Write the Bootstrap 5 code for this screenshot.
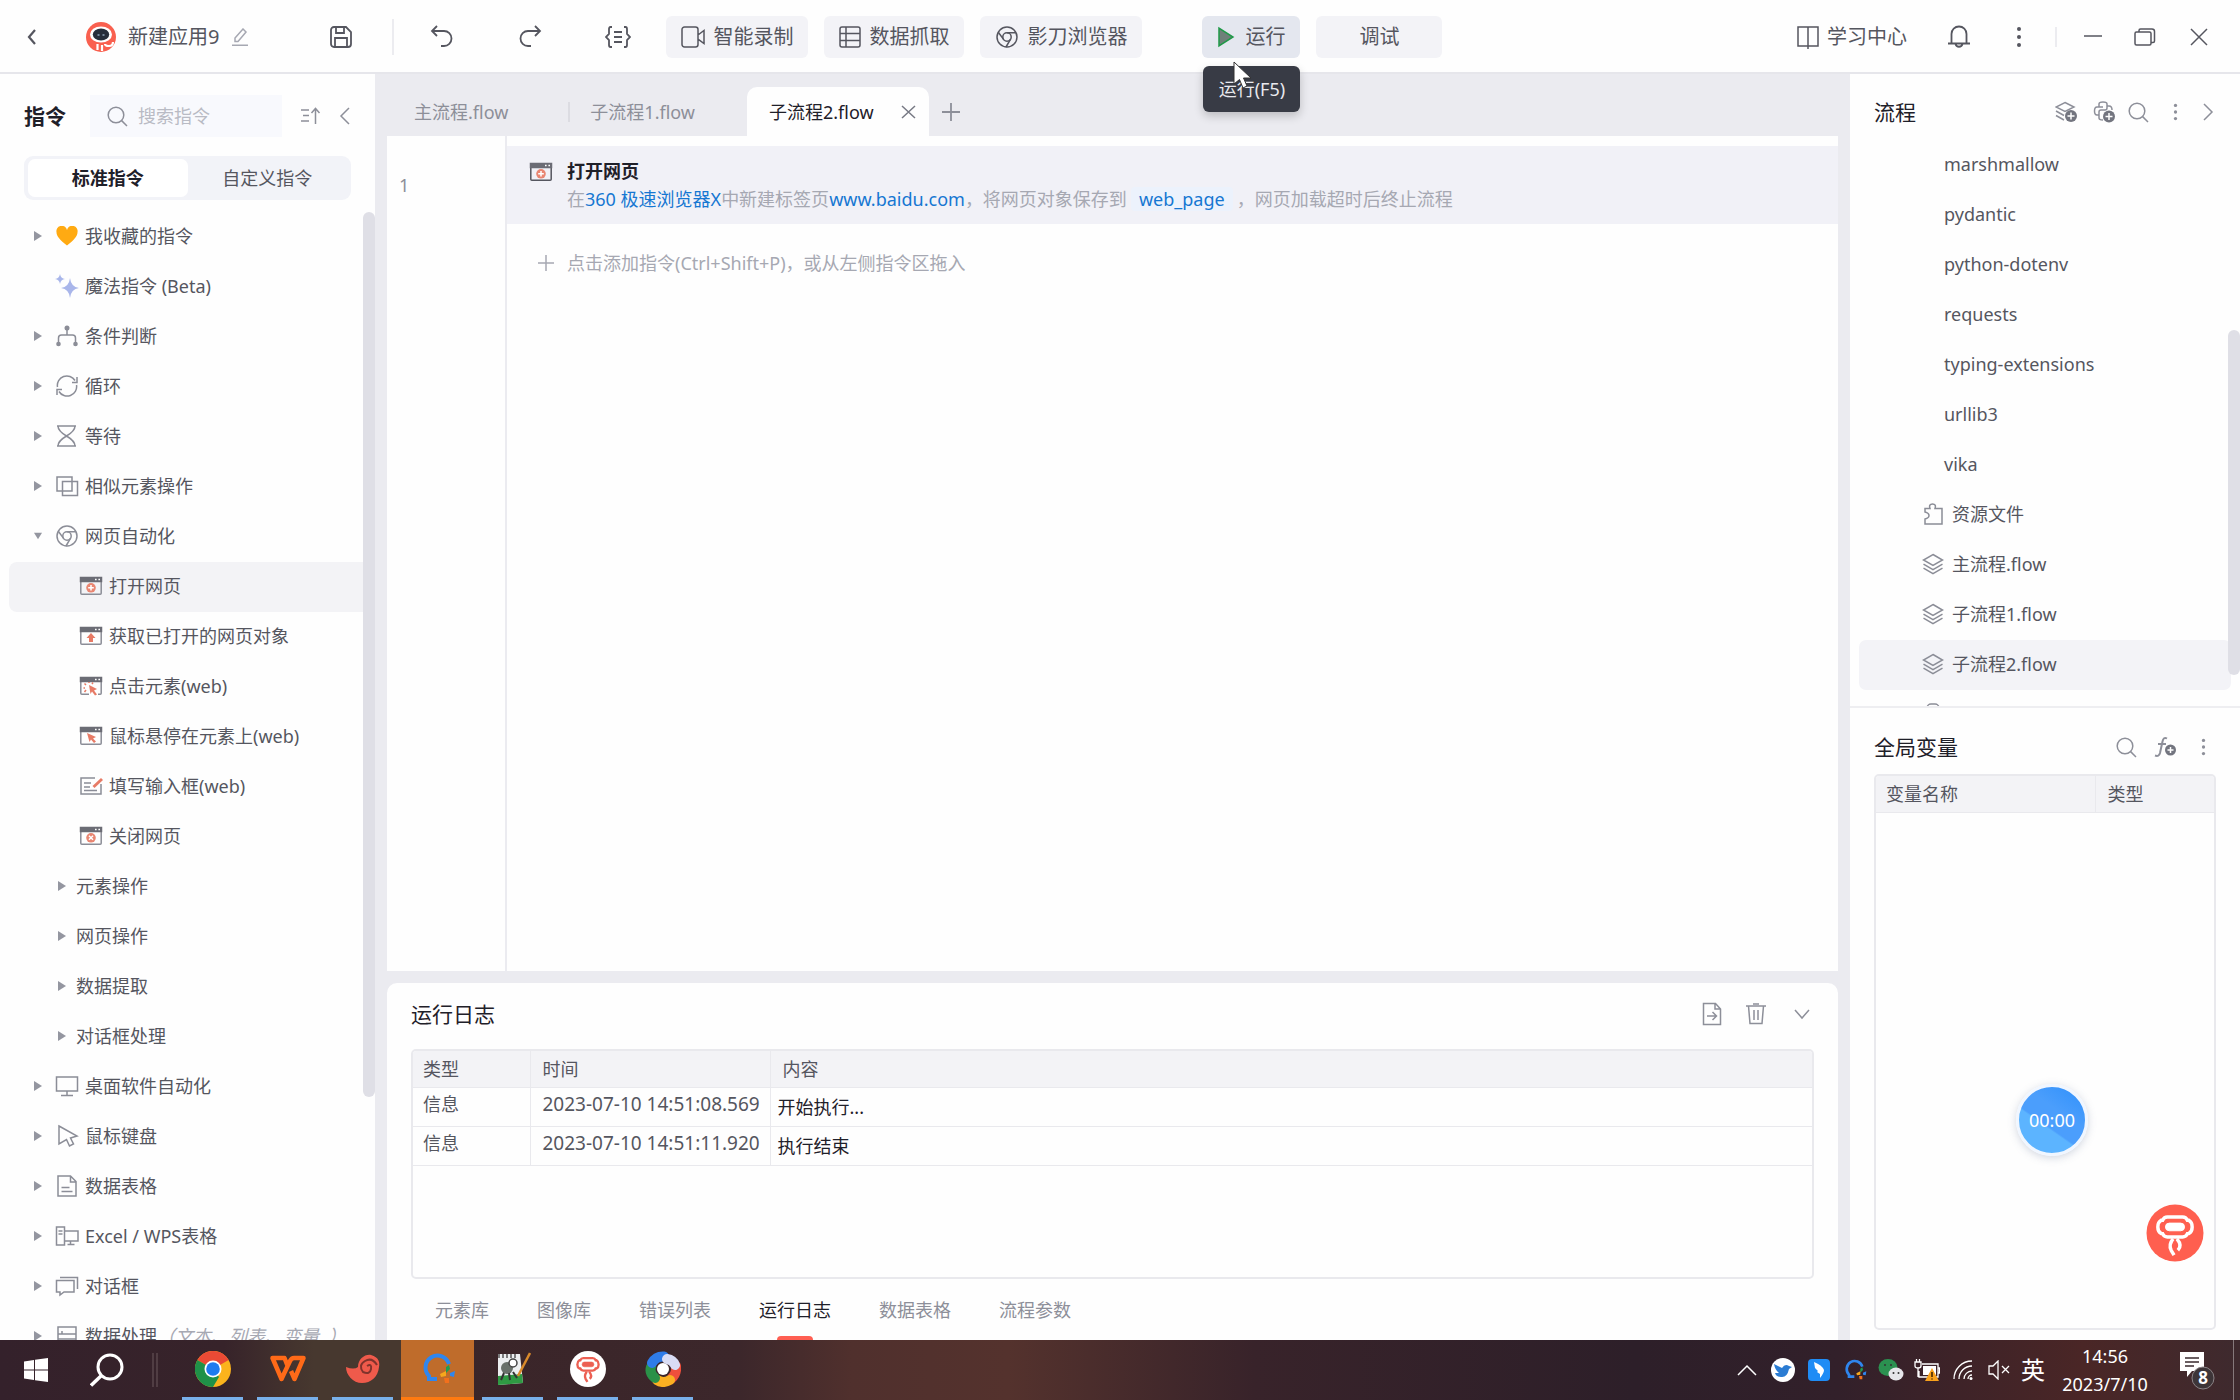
<!DOCTYPE html>
<html lang="zh-CN">
<head>
<meta charset="utf-8">
<meta name="viewport" content="width=device-width, initial-scale=1">
<title>新建应用9</title>
<link href="https://cdn.jsdelivr.net/npm/bootstrap@5.3.0/dist/css/bootstrap.min.css" rel="stylesheet">
<style>
:root{--ink:#1f2029;--txt:#55565f;--dim:#8d8f99;--pale:#a6a8b2;--line:#e9e9ed;--gut:#ebebf0;--soft:#f3f3f7;--blue:#1677d2;--red:#ff5f52}
body{font-family:"Noto Sans","Noto Sans CJK SC",sans-serif;font-size:18px;line-height:26px;color:var(--txt);background:var(--gut);height:100vh;overflow:hidden}
button,input{font:inherit;color:inherit}
svg{fill:none;stroke:currentColor;stroke-width:1.5;flex:none;display:block}
.plain{border:0;background:none;padding:0;display:flex;align-items:center;justify-content:center}
.ink{color:var(--ink)}.dim{color:var(--dim)}.pale{color:var(--pale)}.blue{color:var(--blue)}
.h21{font-size:21px;line-height:28px;color:var(--ink);font-weight:400;margin:0}
/* top bar */
.topbar{height:74px;border-bottom:2px solid #e6e6eb;background:#fefefe;font-size:20px;padding-top:1px}
.tbtn{width:40px;height:40px}
.g10{margin-left:10px}.g12{margin-left:12px}.g20{margin-left:20px}.g28{margin-left:28px}.g32{margin-left:32px}.g48{margin-left:48px}.g60{margin-left:60px}.g72{margin-left:72px}
.vline{width:2px;background:#ececf0}
.pill{height:42px;border:0;border-radius:6px;background:var(--soft);display:flex;align-items:center;gap:8px;padding:0 15px;white-space:nowrap}
.pill+.pill{margin-left:16px}
.pill.run{background:#e4e7ef;gap:10px}
.pill.debug{width:126px;justify-content:center;margin-left:16px}
.tip{position:absolute;top:50px;left:1px;width:97px;height:46px;line-height:46px;text-align:center;background:#383b45;color:#e8e9ee;font-size:18px;border-radius:6px;box-shadow:0 4px 10px #0003;z-index:5}
.cursor{position:absolute;left:31px;top:45px;z-index:6}
/* sidebar */
.side{width:375px;background:#fefefe}
.finder{width:192px;height:42px;background:#f8f9fd;padding-left:16px}
.finder input{border:0;background:none;outline:0;min-width:0;width:120px;padding:0 0 0 2px}
.finder input::placeholder{color:#b9bbc4;opacity:1}
.seg{margin:19px 24px 12px;height:45px;background:#f2f3f8;border-radius:9px;padding:3px 4px}
.seg .plain{flex:1;border-radius:7px}
.seg .plain.on{background:#fff;font-weight:700;color:var(--ink)}
.tree{overflow:hidden;position:relative}
.node{height:50px;display:flex;align-items:center;padding:0 0 2px 34px;white-space:nowrap}
.node .tw{width:8px;margin-right:13px;color:#9496a0}
.node .ic{width:24px;margin-right:6px;color:#8b8d97}
.node.sub{padding-left:58px}.node.sub .tw{margin-right:10px}
.node.leaf{padding-left:70px;margin-left:9px}
.node.on{background:#f3f3f6;border-radius:8px}
.thumb{position:absolute;right:0;width:12px;border-radius:6px;background:#dfdfe6}
/* center */
.mid{margin:0 12px;min-width:0}
.tabsrow{height:62px;padding-top:13px}
.ftab{height:49px;padding:0 60px 0 27px;color:var(--dim)}
.ftab.next{padding:0 52px 0 20px}
.ftab.on{background:#fefefe;border-radius:10px 10px 0 0;color:var(--ink);width:182px;padding:0 13px 0 22px;justify-content:space-between}
.editor{background:#fefefe}
.gutter{width:120px;border-right:2px solid var(--gut);padding:36px 12px 0}
.step{margin-top:10px;height:78px;background:#f1f1f7;padding:12px 22px;gap:14px}
.step .ttl{font-weight:700;color:var(--ink)}
.step .dsc{line-height:30px}
.chip{background:#ecf2fc;padding:0 8px;margin:0 4px;border-radius:4px}
.logs{background:#fefefe;border-radius:10px 10px 0 0;margin-top:12px}
.gridbox{border:2px solid var(--line);border-radius:5px;overflow:hidden}
.gridbox table{width:100%;table-layout:fixed;border-collapse:collapse;margin:0}
.gridbox th{background:#f3f3f6;font-weight:400;height:36px;padding:0 12px;border-bottom:1px solid var(--line)}
.gridbox td{height:39px;padding:3px 12px 0;vertical-align:top;border-bottom:1px solid var(--line)}
.gridbox th:first-child,.gridbox td:first-child{padding-left:10px}
.gridbox th+th,.gridbox td+td{border-left:1px solid var(--line)}
.gridbox td.stamp{font-size:19px;padding-right:0;white-space:nowrap}
.gridbox td.msg{padding:6px 7px 0;color:var(--ink)}
.btab{padding:0 24px;height:61px;position:relative;color:var(--dim)}
.btab.on{color:var(--ink)}
.btab.on::after{content:"";position:absolute;left:50%;bottom:0;width:36px;height:4px;margin-left:-18px;border-radius:4px 4px 0 0;background:var(--red)}
/* right */
.rail{width:390px;background:#fefefe}
.rail section{flex:1 1 0;min-height:0;position:relative;overflow:hidden}
.rail .ic{color:#8b8d97}
.frow{height:50px;display:flex;align-items:center;margin:0 9px;padding:0 0 2px 85px}
.frow.file{padding-left:63px;gap:8px}
.frow.on{background:var(--soft);border-radius:7px}
.ball{position:absolute;width:72px;height:72px;border-radius:50%;border:3px solid #f0f6ff;right:152px;bottom:184px;background:linear-gradient(35deg,#5cb4ff 0 40%,#4b9efc 42% 62%,#2f90fb);box-shadow:0 2px 8px #5a6a9045;color:#fff;line-height:66px;text-align:center}
.helper{position:absolute;right:36px;bottom:78px}
/* taskbar */
.task{height:60px;color:#fff;background:linear-gradient(90deg,#34212b 0,#37232a 10%,#47382f 14%,#47382f 18%,#3a2529 20%,#3c272b 33%,#50302d 38%,#54322d 45%,#38232a 56%,#2d1f29 73%,#32202a 82%,#4a2626 93%,#3e2a2e 100%)}
.app{width:61px;height:60px;margin-right:14px;border-bottom:3px solid #78b0ea}
.app.live{width:73px;margin:0 8px 0 -6px;background:#bf6c2b;border-color:#ff7a10}
.tray{height:60px;width:36px}
</style>
<script src="https://cdn.jsdelivr.net/npm/bootstrap@5.3.0/dist/js/bootstrap.bundle.min.js"></script>
</head>
<body class="d-flex flex-column">
<svg width="0" height="0" class="position-absolute" aria-hidden="true">
<symbol id="tri" viewBox="0 0 8 12"><path d="M0 1v10l8-5z" fill="#9496a0" stroke="none"/></symbol>
<symbol id="trid" viewBox="0 0 10 8"><path d="M0 0h10L5 8z" fill="#9496a0" stroke="none"/></symbol>
<symbol id="lens" viewBox="0 0 22 22"><circle cx="10" cy="10" r="7.8"/><path d="M15.6 15.6 21 21"/></symbol>
<symbol id="dots" viewBox="0 0 6 22"><g fill="currentColor" stroke="none"><circle cx="3" cy="3" r="2"/><circle cx="3" cy="11" r="2"/><circle cx="3" cy="19" r="2"/></g></symbol>
<symbol id="web" viewBox="0 0 24 24"><circle cx="12" cy="12" r="10"/><circle cx="12" cy="12" r="4.2"/><path d="M12 7.8h9.1M8.4 14.1 3.3 7.2M15.6 14.1 11 22"/></symbol>
<symbol id="win" viewBox="0 0 24 20"><rect x="1.8" y="1.8" width="20.4" height="16.4" rx="1"/><path d="M1.5 1.5h21v4h-21z" fill="#6b6c75" stroke="#6b6c75"/><path d="M16 3.5h1.6M19.4 3.5H21" stroke="#fff"/></symbol>
<symbol id="stack" viewBox="0 0 22 22"><path d="M11 1.5 20.5 7 11 12.5 1.5 7zM1.5 11.2 11 16.6l9.500-5.400M1.500 15.200 11 20.600l9.500-5.400"/></symbol>
<symbol id="bot" viewBox="0 0 40 44"><path d="M12 2h16q3.500 0 5 3.500h1.500q3.500 2 3.500 7t-3.500 7H33Q31.500 23 28 23H12q-3.500 0-5-3.500H5.500Q2 17.500 2 12.500t3.500-7H7Q8.500 2 12 2z"/><path d="M14 8.500h12a4 4 0 0 1 0 8H14a4 4 0 0 1 0-8z" fill="currentColor" stroke-width="1"/><path d="M18 25q-5 6-2 12l3 5M22 25q6 7 1 12"/></symbol>
<symbol id="qsnip" viewBox="0 0 36 34"><path d="M29 12A12 12 0 1 0 9 24v3h8" stroke="#2f86ee" stroke-width="4"/><path d="M26 15l3-2 1 4-4 4z" fill="#1f9d50" stroke="none"/><path d="M20 22l6-3v5l-5 1z" fill="#f6a81c" stroke="none"/><path d="M24 26h5v5h-4z" fill="#f2701c" stroke="none"/><path d="M30 21l5-2-1 6-4-1z" fill="#2f86ee" stroke="none"/></symbol>
</svg>

<header class="topbar d-flex align-items-center flex-shrink-0">
  <button class="plain tbtn g12" aria-label="返回"><svg width="10" height="18" viewBox="0 0 10 18"><path d="M8 2 2 9l6 7" stroke-width="2.2"/></svg></button>
  <svg class="g32" width="32" height="30" viewBox="-2 0 32 30"><circle cx="15" cy="15" r="15" fill="#f9604f" stroke="none"/><ellipse cx="15" cy="12.500" rx="11" ry="8" fill="#fff" stroke="none"/><ellipse cx="15" cy="12.500" rx="8.200" ry="6" fill="#272e3b" stroke="none"/><path d="M11.500 13h2M16.500 13h2" stroke="#8fa3b8"/><path d="M11.500 22v6M16 23v6M27 20q0 4-4 4t-4-2" stroke="#fff" stroke-width="2.200"/></svg>
  <span class="g12">新建应用9</span>
  <button class="plain g12 pale" aria-label="重命名"><svg width="18" height="18" viewBox="0 0 18 18"><path d="M4 13.500V10L12 1l3 3-8 9.500zM1 17.200h16"/></svg></button>
  <button class="plain tbtn g72" aria-label="保存"><svg width="24" height="24" viewBox="0 0 24 24"><path d="M2 5a3 3 0 0 1 3-3h12l5 5v12a3 3 0 0 1-3 3H5a3 3 0 0 1-3-3zM6 22v-9h12v9M7 2v6h8V2" stroke-width="1.800"/></svg></button>
  <span class="vline" style="height:36px;margin-left:31px"></span>
  <button class="plain tbtn g28" aria-label="撤销"><svg width="24" height="24" viewBox="0 0 24 24"><path d="M7 1 2 6l5 5M2 6h12a7.500 7.500 0 0 1 0 15h-3" stroke-width="1.800"/></svg></button>
  <button class="plain tbtn g48" aria-label="重做"><svg width="24" height="24" viewBox="0 0 24 24"><path d="m17 1 5 5-5 5M22 6H10a7.500 7.500 0 0 0 0 15h3" stroke-width="1.800"/></svg></button>
  <button class="plain tbtn g48" aria-label="变量"><svg width="26" height="24" viewBox="0 0 26 24"><path d="M7 2H5.500Q4 2 4 4v5l-3 3 3 3v5q0 2 1.500 2H7M19 2h1.500Q22 2 22 4v5l3 3-3 3v5q0 2-1.500 2H19M9 7h8M9 12h8M9 17h8" stroke-width="1.800"/></svg></button>
  <button class="pill g28"><svg width="24" height="24" viewBox="0 0 24 24"><path d="M1 4.500A2.500 2.500 0 0 1 3.500 2h11A2.500 2.500 0 0 1 17 4.500v15a2.500 2.500 0 0 1-2.500 2.500h-11A2.500 2.500 0 0 1 1 19.500zM17 10l6-4.500v13L17 14z"/></svg>智能录制</button>
  <button class="pill"><svg width="22" height="24" viewBox="0 0 22 24"><rect x="1" y="2" width="20" height="20" rx="2"/><path d="M7 2v20M1 8.500h20M1 15.500h20"/></svg>数据抓取</button>
  <button class="pill"><svg width="24" height="24"><use href="#web"/></svg>影刀浏览器</button>
  <div class="position-relative g60">
    <button class="pill run" aria-describedby="runtip"><svg width="18" height="22" viewBox="0 0 18 22"><path d="M2 2v18l14-9z" fill="#6f8079" stroke="#1f9a48"/></svg>运行</button>
    <div class="tip" id="runtip" role="tooltip">运行(F5)</div>
    <svg class="cursor" width="20" height="30" viewBox="0 0 20 30"><path d="M1 1v22l5.500-4.500L10 27l4-2-3.500-8H18z" fill="#fff" stroke="#333" stroke-width="1"/></svg>
  </div>
  <button class="pill debug">调试</button>
  <div class="ms-auto d-flex align-items-center">
    <button class="plain"><svg class="me-2" width="22" height="24" viewBox="0 0 22 24"><path d="M1 2h20v19H1zM11 2v22"/></svg>学习中心</button>
    <button class="plain tbtn g32" aria-label="通知"><svg width="24" height="24" viewBox="0 0 24 24"><path d="M4.500 18.500V9a7.500 7.500 0 0 1 15 0v9.500M1 18.500h22M8.500 19a3.600 3.600 0 0 0 7 0" stroke-width="1.800"/></svg></button>
    <button class="plain tbtn g20" aria-label="更多"><svg width="6" height="22"><use href="#dots"/></svg></button>
    <span class="vline ms-3" style="height:20px"></span>
    <button class="plain tbtn ms-3" aria-label="最小化"><svg width="18" height="18" viewBox="0 0 18 18"><path d="M0 8h18"/></svg></button>
    <button class="plain tbtn g12" aria-label="还原"><svg width="22" height="20" viewBox="0 0 22 20"><rect x="1" y="5" width="16" height="13" rx="1.500"/><path d="M5 5V3.500Q5 2 6.500 2H18q2.500 0 2.500 2.500V14q0 1.500-1.500 1.500h-2"/></svg></button>
    <button class="plain tbtn" style="margin:0 21px 0 14px" aria-label="关闭"><svg width="18" height="18" viewBox="0 0 18 18"><path d="m1 1 16 16M17 1 1 17"/></svg></button>
  </div>
</header>

<main class="d-flex flex-grow-1" style="min-height:0">
<aside class="side d-flex flex-column flex-shrink-0">
  <div class="d-flex align-items-center" style="padding:21px 24px 0">
    <h2 class="h21 fw-bold">指令</h2>
    <label class="finder d-flex align-items-center ms-4 dim"><svg class="me-2" width="22" height="22"><use href="#lens"/></svg><input type="search" placeholder="搜索指令" aria-label="搜索指令"></label>
    <button class="plain dim" style="margin-left:18px" aria-label="排序"><svg width="21" height="18" viewBox="0 0 21 18"><path d="M1 3h8M3 8.500h6M1 14h8M15.500 17V2M11.500 6l4-4.500 4 4.500"/></svg></button>
    <button class="plain dim ms-3" aria-label="收起"><svg width="14" height="18" viewBox="-2 0 14 18"><path d="M10 1 2 9l8 8"/></svg></button>
  </div>
  <div class="seg d-flex"><button class="plain on">标准指令</button><button class="plain">自定义指令</button></div>
  <div class="tree flex-grow-1">
    <div class="node"><svg class="tw" height="12"><use href="#tri"/></svg><svg class="ic" height="20" viewBox="0 0 24 20"><path d="M12 19.500C5 14 1.500 10.500 1.500 6.300A5.300 5.300 0 0 1 12 4a5.300 5.300 0 0 1 10.500 2.300c0 4.200-3.500 7.700-10.500 13.200z" fill="#ffaa12" stroke="none"/></svg>我收藏的指令</div>
    <div class="node"><span class="tw"></span><svg class="ic" height="24" viewBox="0 0 24 24"><g fill="#a9b6ea" stroke="none"><path d="M15 4q1 9 9 10-8 1-9 10-1-9-9-10 8-1 9-10z"/><path d="M5 0q.7 4.300 5 5-4.300.7-5 5-.7-4.300-5-5 4.300-.7 5-5z"/></g></svg>魔法指令 (Beta)</div>
    <div class="node"><svg class="tw" height="12"><use href="#tri"/></svg><svg class="ic" height="22" viewBox="0 0 24 22"><path d="M12 3v7M3.500 19v-6q0-3 3-3h11q3 0 3 3v6"/><g fill="#8b8d97" stroke="none"><circle cx="12" cy="3" r="2.500"/><circle cx="3.500" cy="19" r="2.300"/><circle cx="20.500" cy="19" r="2.300"/></g></svg>条件判断</div>
    <div class="node"><svg class="tw" height="12"><use href="#tri"/></svg><svg class="ic" height="22" viewBox="0 0 24 22"><path d="M2.500 12A9.500 9.500 0 0 1 20 5.500M21.500 10A9.500 9.500 0 0 1 4 16.500M22 2v5.500h-5M2 20v-5.500h5"/></svg>循环</div>
    <div class="node"><svg class="tw" height="12"><use href="#tri"/></svg><svg class="ic" height="24" viewBox="0 0 24 24"><path d="M2 2h19M2 22h19M3 2q0 5 8.500 10Q3 17 3 22M20 2q0 5-8.500 10Q20 17 20 22"/></svg>等待</div>
    <div class="node"><svg class="tw" height="12"><use href="#tri"/></svg><svg class="ic" height="22" viewBox="0 0 24 22"><path d="M2 2h15v14H2zM7.500 6.500h15v14h-15z"/></svg>相似元素操作</div>
    <div class="node"><svg class="tw" height="8"><use href="#trid"/></svg><svg class="ic" height="24"><use href="#web"/></svg>网页自动化</div>
    <div class="node leaf on"><svg class="ic" height="20" viewBox="0 0 24 20"><use href="#win" width="24" height="20"/><circle cx="12" cy="11.800" r="4.800" fill="#e98672" stroke="none"/><path d="M12 9v5.600M9.200 11.800h5.600" stroke="#fff"/></svg>打开网页</div>
    <div class="node leaf"><svg class="ic" height="20" viewBox="0 0 24 20"><use href="#win" width="24" height="20"/><path d="M12 7l4.500 5H14v4h-4v-4H7.500z" fill="#e77b66" stroke="none"/></svg>获取已打开的网页对象</div>
    <div class="node leaf"><svg class="ic" height="20" viewBox="0 0 24 20"><use href="#win" width="24" height="20"/><path d="M10 17h9v3h-9z" fill="#fff" stroke="none"/><path d="m10 9 8 4-3 1.500 3 4-2 1-3-4-1.500 2.500z" fill="#e77b66" stroke="none"/><path d="M6 12H4.500M7 9 5.500 7.500M10 7V6M13 8l1-1.500M7 14l-1.500 2" stroke="#e77b66"/></svg>点击元素(web)</div>
    <div class="node leaf"><svg class="ic" height="20" viewBox="0 0 24 20"><use href="#win" width="24" height="20"/><path d="m8 7 9 4-3 1.500 3 3-2 1.500-3-3.500-1.500 2.500z" fill="#e77b66" stroke="none"/></svg>鼠标悬停在元素上(web)</div>
    <div class="node leaf"><svg class="ic" height="20" viewBox="0 0 24 20"><path d="M16 2H2v16h20V8M5 7h7M5 11h6M5 14.500h13"/><path d="M14.500 11 23 3" stroke="#e77b66" stroke-width="3"/></svg>填写输入框(web)</div>
    <div class="node leaf"><svg class="ic" height="20" viewBox="0 0 24 20"><use href="#win" width="24" height="20"/><circle cx="12" cy="11.800" r="4.800" fill="#e98672" stroke="none"/><path d="m10 9.800 4 4M14 9.800l-4 4" stroke="#fff"/></svg>关闭网页</div>
    <div class="node sub"><svg class="tw" height="12"><use href="#tri"/></svg>元素操作</div>
    <div class="node sub"><svg class="tw" height="12"><use href="#tri"/></svg>网页操作</div>
    <div class="node sub"><svg class="tw" height="12"><use href="#tri"/></svg>数据提取</div>
    <div class="node sub"><svg class="tw" height="12"><use href="#tri"/></svg>对话框处理</div>
    <div class="node"><svg class="tw" height="12"><use href="#tri"/></svg><svg class="ic" height="22" viewBox="0 0 24 22"><path d="M1.500 2h21v14h-21zM12 16v4M6 20.500h12"/></svg>桌面软件自动化</div>
    <div class="node"><svg class="tw" height="12"><use href="#tri"/></svg><svg class="ic" height="24" viewBox="0 0 24 24"><path d="m4 2 18 10-6.500 2 3 6-4 2-3-6.500L4 20z"/></svg>鼠标键盘</div>
    <div class="node"><svg class="tw" height="12"><use href="#tri"/></svg><svg class="ic" height="24" viewBox="0 0 24 24"><path d="M3 2h12.500l5.500 5.500V22H3zM15.500 2v6H21M6.500 13.500h8M6.500 17.500h11"/></svg>数据表格</div>
    <div class="node"><svg class="tw" height="12"><use href="#tri"/></svg><svg class="ic" height="22" viewBox="0 0 24 22"><path d="M1.500 2h8v18h-8zM3.500 6h4M3.500 9h4M9.500 6H23v10H9.500M15.500 16v3M12.500 19.500h7"/></svg>Excel / WPS表格</div>
    <div class="node"><svg class="tw" height="12"><use href="#tri"/></svg><svg class="ic" height="22" viewBox="0 0 24 22"><path d="M1.500 5.500H19V17H9l-4 3v-3H1.500zM5 2.500h17.500V14"/></svg>对话框</div>
    <div class="node"><svg class="tw" height="12"><use href="#tri"/></svg><svg class="ic" height="22" viewBox="0 0 24 22"><path d="M3 2h18v18H3zM3 9h18M7 9V6M3 14h18"/></svg>数据处理<i class="pale">（文本、列表、变量..）</i></div>
    <span class="thumb" style="top:0;height:885px"></span>
  </div>
</aside>

<div class="mid flex-grow-1 d-flex flex-column">
  <nav class="tabsrow d-flex align-items-center flex-shrink-0">
    <button class="plain ftab">主流程.flow</button><span class="vline" style="height:20px;background:#dcdce2"></span>
    <button class="plain ftab next">子流程1.flow</button>
    <button class="plain ftab on">子流程2.flow<svg width="15" height="14" viewBox="0 0 15 14"><path d="m1 1 13 12M14 1 1 13" stroke="#777984"/></svg></button>
    <button class="plain g12 dim" aria-label="新建"><svg width="20" height="20" viewBox="0 0 20 20"><path d="M10 1v18M1 10h18" stroke-width="1.800"/></svg></button>
  </nav>
  <section class="editor flex-grow-1 d-flex">
    <div class="gutter dim">1</div>
    <div class="flex-grow-1">
      <div class="step d-flex">
        <svg width="24" height="20" viewBox="0 0 24 20" class="mt-1"><use href="#win" width="24" height="20"/><circle cx="12" cy="11.800" r="4.800" fill="#e98672" stroke="none"/><path d="M12 9v5.600M9.200 11.800h5.600" stroke="#fff"/></svg>
        <div><div class="ttl">打开网页</div><div class="dsc pale">在<a class="blue text-decoration-none" href="#">360 极速浏览器X</a>中新建标签页<a class="blue text-decoration-none" href="#">www.baidu.com</a>，将网页对象保存到<span class="chip blue">web_page</span>，网页加载超时后终止流程</div></div>
      </div>
      <button class="plain pale" style="padding:26px 0 0 30px"><svg width="18" height="18" viewBox="0 0 18 18" class="me-2"><path d="M9 1v16M1 9h16"/></svg><span class="ms-1">点击添加指令(Ctrl+Shift+P)，或从左侧指令区拖入</span></button>
    </div>
  </section>
  <section class="logs flex-shrink-0 px-4">
    <div class="d-flex align-items-center pb-1" style="height:66px">
      <h2 class="h21 me-auto">运行日志</h2>
      <button class="plain dim" aria-label="导出"><svg width="20" height="24" viewBox="0 0 20 24"><path d="M1.500 1.500h12L18.500 7v15.500h-17zM13 1.500V7h5.500M5 14h9M10.500 10l4 4-4 4"/></svg></button>
      <button class="plain dim ms-4" aria-label="清空"><svg width="20" height="24" viewBox="0 0 20 24"><path d="M0 4h20M7 2h6M2.500 4 4 21.500h12L17.500 4M8 8v10M12 8v10"/></svg></button>
      <button class="plain dim g28 me-1" aria-label="收起"><svg width="16" height="12" viewBox="0 0 16 12"><path d="m1 2 7 8 7-8"/></svg></button>
    </div>
    <div class="gridbox" style="height:230px">
      <table>
        <colgroup><col style="width:117px"><col style="width:240px"><col></colgroup>
        <thead><tr><th scope="col">类型</th><th scope="col">时间</th><th scope="col">内容</th></tr></thead>
        <tbody><tr><td>信息</td><td class="stamp">2023-07-10 14:51:08.569</td><td class="msg">开始执行...</td></tr>
        <tr><td>信息</td><td class="stamp">2023-07-10 14:51:11.920</td><td class="msg">执行结束</td></tr></tbody>
      </table>
    </div>
    <nav class="d-flex"><button class="plain btab">元素库</button><button class="plain btab">图像库</button><button class="plain btab">错误列表</button><button class="plain btab on">运行日志</button><button class="plain btab">数据表格</button><button class="plain btab">流程参数</button></nav>
  </section>
</div>

<aside class="rail d-flex flex-column flex-shrink-0">
  <section style="border-bottom:2px solid #eeeef1">
    <div class="d-flex align-items-center ps-4 dim" style="height:66px;padding:10px 26px 0 0">
      <h2 class="h21 me-auto">流程</h2>
      <svg width="22" height="22" viewBox="0 0 22 22"><path d="M10 1.500 19 6l-9 4.500L1 6zM1 10l8 4.500M1 14.500 9 19"/><circle cx="16" cy="15" r="6" fill="#73757f" stroke="none"/><path d="M16 11.500v7M12.500 15h7" stroke="#fff"/></svg>
      <svg class="ms-3" width="22" height="22" viewBox="0 0 22 22"><path d="M6 6V3q0-2 4-2t4 2v4q0 2-2 2H8q-2 0-2 2v3H4q-2.500 0-2.500-4T4 6h6M14 5h2q3 0 3 4M6 14v3q0 2 4 2"/><circle cx="16" cy="15.500" r="6" fill="#73757f" stroke="none"/><path d="M16 12v7M12.500 15.500h7" stroke="#fff"/></svg>
      <svg class="g12" width="22" height="22"><use href="#lens"/></svg>
      <svg class="ms-4" width="5" height="18"><use href="#dots"/></svg>
      <svg class="ms-4" width="12" height="18" viewBox="0 0 12 18"><path d="m2 1 8 8-8 8"/></svg>
    </div>
    <div class="frow">marshmallow</div><div class="frow">pydantic</div><div class="frow">python-dotenv</div><div class="frow">requests</div><div class="frow">typing-extensions</div><div class="frow">urllib3</div><div class="frow">vika</div>
    <div class="frow file"><svg class="ic" width="22" height="24" viewBox="0 0 22 24"><path d="M3 22V17q4-1 4-3.500T3 10V6.500h5Q6.500 2 10.500 2T13 6.500h7V22z"/></svg>资源文件</div>
    <div class="frow file"><svg class="ic" width="22" height="22"><use href="#stack"/></svg>主流程.flow</div>
    <div class="frow file"><svg class="ic" width="22" height="22"><use href="#stack"/></svg>子流程1.flow</div>
    <div class="frow file on"><svg class="ic" width="22" height="22"><use href="#stack"/></svg>子流程2.flow</div>
    <div class="frow file"><svg class="ic" width="22" height="24" viewBox="0 0 22 24"><rect x="5" y="2" width="12" height="20" rx="4"/></svg></div>
    <span class="thumb" style="top:256px;height:345px"></span>
  </section>
  <section class="d-flex flex-column ps-4">
    <div class="d-flex align-items-center dim flex-shrink-0" style="height:66px;padding:12px 34px 0 0">
      <h2 class="h21 me-auto">全局变量</h2>
      <svg width="22" height="22"><use href="#lens"/></svg>
      <svg class="ms-3" width="24" height="22" viewBox="0 0 24 22"><path d="M14 2.500q-3.500-2-4.500 3L7 17q-1 4-5 2.500M5 8h8" stroke-width="2"/><circle cx="17.500" cy="14" r="5.500" fill="#73757f" stroke="none"/><path d="M17.500 11v6M14.500 14h6" stroke="#fff"/></svg>
      <svg class="ms-4" width="5" height="18"><use href="#dots"/></svg>
    </div>
    <div class="gridbox flex-grow-1" style="margin:0 24px 10px 0">
      <table><colgroup><col style="width:219px"><col></colgroup><thead><tr><th scope="col">变量名称</th><th scope="col">类型</th></tr></thead></table>
    </div>
    <div class="ball">00:00</div>
    <svg class="helper" width="58" height="58" viewBox="0 0 58 58"><circle cx="29" cy="29" r="28.500" fill="#ff5f4f" stroke="none"/><svg x="9" y="11" width="40" height="42" color="#fff" style="stroke-width:3.6"><use href="#bot"/></svg></svg>
  </section>
</aside>
</main>

<footer class="task d-flex align-items-center flex-shrink-0">
  <svg width="24" height="24" viewBox="0 0 24 24" style="margin-left:24px"><path d="M0 3.500 10 2v9.500H0zM11 1.800 24 0v11.500H11zM0 12.500h10V22L0 20.500zM11 12.500h13V24l-13-1.800z" fill="#fff" stroke="none"/></svg>
  <svg width="34" height="34" viewBox="0 0 34 34" style="margin-left:42px"><circle cx="20" cy="14" r="12" stroke-width="3"/><path d="M12 22 1 32.500" stroke-width="3.500"/></svg>
  <svg width="6" height="34" viewBox="0 0 6 34" class="g28 me-4"><path d="M1 0v34M5 0v34" stroke="#6b585c" stroke-width="1"/></svg>
  <button class="plain app" aria-label="Chrome"><svg width="36" height="36" viewBox="0 0 36 36"><circle cx="18" cy="18" r="18" fill="#fbb31c" stroke="none"/><path d="M18 18 2.400 9A18 18 0 0 1 33.600 9z" fill="#ea4a35" stroke="none"/><path d="M18 18 2.400 9A18 18 0 0 0 18 36l6-10z" fill="#1f9148" stroke="none"/><circle cx="18" cy="18" r="8.500" fill="#fff" stroke="none"/><circle cx="18" cy="18" r="6.800" fill="#1f7bee" stroke="none"/></svg></button>
  <button class="plain app" aria-label="WPS"><svg width="36" height="28" viewBox="0 0 36 28"><path d="M18 12 14.500 3H2.500l9 21L20 6q1.500-3 4-3h9.500l-9 21-3.500-8" style="stroke-width:4.500" stroke="#ff6a18" stroke-linejoin="round"/></svg></button>
  <button class="plain app" aria-label="螺"><svg width="36" height="30" viewBox="0 0 36 30"><path d="M1 13q8 3 12 0c0-8 7-13 13-12 8 2 9 8 8 12-1 10-8 16-17 16S1 21 1 13z" fill="#ef5a4b" stroke="none"/><path d="M32 11q-5-8-12-4t-2 11q7 3 8-3t-4-3" stroke="#80332c" stroke-width="2"/></svg></button>
  <button class="plain app live" aria-label="录屏"><svg width="36" height="34"><use href="#qsnip"/></svg></button>
  <button class="plain app" aria-label="画图"><svg width="36" height="36" viewBox="0 0 36 36"><path d="M3 3h22l3 29-25 2z" fill="#eceef0" stroke="none"/><path d="M3 25l24-2 1 9-25 2z" fill="#2f9a43" stroke="none"/><path d="M4 3v4M8 3v4M12 3v4M16 3v4M20 3v4" stroke="#555"/><circle cx="12" cy="17" r="6" fill="#68706a" stroke="none"/><circle cx="18" cy="12" r="4" fill="#fff" stroke="#444"/><path d="M9 22l-3 7M14 22l1 7M18 21l4 6" stroke="#333" stroke-width="2"/><path d="m23 25 12-23" stroke="#d98a2b" stroke-width="2.500"/></svg></button>
  <button class="plain app" aria-label="影刀"><svg width="36" height="36" viewBox="0 0 36 36"><circle cx="18" cy="18" r="18" fill="#fff" stroke="none"/><svg x="6" y="6" width="24" height="26" color="#ec5f52" style="stroke-width:4"><use href="#bot"/></svg></svg></button>
  <button class="plain app" aria-label="浏览器"><svg width="36" height="36" viewBox="0 0 36 36"><g stroke-width="10" stroke-linecap="round"><path d="M31 15Q32 23 26 28" stroke="#ee4f3c"/><path d="M25 29Q18 33 12 29" stroke="#fbb022"/><path d="M10 27Q4 22 6 16" stroke="#2a9148"/><path d="M7 12Q11 5 19 5.500" stroke="#2f7ce8"/><path d="M22 8Q28 9 30 14" stroke="#d9dcf4"/></g><circle cx="18" cy="18" r="6" fill="#fff" stroke="none"/></svg></button>
  <div class="ms-auto d-flex align-items-center">
    <button class="plain tray" aria-label="展开"><svg width="20" height="12" viewBox="0 0 20 12"><path d="m1 11 9-9 9 9"/></svg></button>
    <button class="plain tray" aria-label="飞鸟"><svg width="24" height="24" viewBox="0 0 24 24"><circle cx="12" cy="12" r="12" fill="#fff" stroke="none"/><path d="M3 6l8 4q3-5 7-2l3 1-3 2q-2 9-8 8-5 0-6-4l4 0q-4-3-5-9z" fill="#2b7cd3" stroke="none"/></svg></button>
    <button class="plain tray" aria-label="羽"><svg width="22" height="22" viewBox="0 0 22 22"><rect width="22" height="22" rx="4" fill="#1f8cf5" stroke="none"/><path d="M6 3q8 3 10 8 0 3-4 8l0-4-3-2 1-1-3-3z" fill="#fff" stroke="none"/></svg></button>
    <button class="plain tray" aria-label="录屏"><svg width="24" height="24"><use href="#qsnip"/></svg></button>
    <button class="plain tray" aria-label="微信"><svg width="26" height="24" viewBox="0 0 26 24"><ellipse cx="10" cy="9.500" rx="9.500" ry="8.500" fill="#2b9150" stroke="none"/><ellipse cx="18" cy="16" rx="7.500" ry="6.500" fill="#e6e6ea" stroke="none"/><g fill="#333" stroke="none"><circle cx="15.500" cy="15" r="1"/><circle cx="20.500" cy="15" r="1"/><circle cx="7" cy="7" r="1"/><circle cx="13" cy="7" r="1"/></g></svg></button>
    <button class="plain tray" aria-label="电源"><svg width="26" height="24" viewBox="0 0 26 24"><path d="M8 6h16v13H5v-6M24 10h1.500v5H24M1 4h6v4q0 2-3 2T1 8zM2.500 4V1M5.500 4V1M4 10v9" stroke-width="1.300"/><path d="M9 8h13v9H9z" fill="#fff" stroke="none"/><path d="m18 10 7 13H11z" fill="#f9a11b" stroke="none"/><path d="M18 14v5M18 20.500v1" stroke="#3a2000"/></svg></button>
    <button class="plain tray" aria-label="网络"><svg width="22" height="22" viewBox="0 0 22 22"><path d="M2 20A18 18 0 0 1 20 2M7 20A13 13 0 0 1 20 7M12 20a8 8 0 0 1 8-8M16 20a4 4 0 0 1 4-4" stroke-width="1.300"/><circle cx="19" cy="19.500" r="1.500" fill="#fff" stroke="none"/></svg></button>
    <button class="plain tray" aria-label="静音"><svg width="22" height="20" viewBox="0 0 22 20"><path d="M1 6h4l5-5v18l-5-5H1zM14 6l7 7M21 6l-7 7" stroke-width="1.300"/></svg></button>
    <button class="plain" style="font-size:24px;padding:0 10px 0 4px">英</button>
    <div class="text-center" style="line-height:28px;width:100px"><div>14:56</div><div>2023/7/10</div></div>
    <button class="plain ms-4 me-3" aria-label="通知"><svg width="38" height="40" viewBox="0 0 38 40"><path d="M1 2h24v19H13l-5 6v-6H1z" fill="#fff" stroke="none"/><path d="M6 8h14M6 12h14M6 16h9" stroke="#3a2a2e"/><circle cx="24" cy="28" r="11" fill="#3d3538" stroke="#8b8386" stroke-width="1"/><text x="24" y="34" text-anchor="middle" fill="#fff" stroke="none" font-size="17" font-weight="700">8</text></svg></button>
    <span style="width:1px;height:60px;background:#85797b;margin-right:6px"></span>
  </div>
</footer>
</body>
</html>
